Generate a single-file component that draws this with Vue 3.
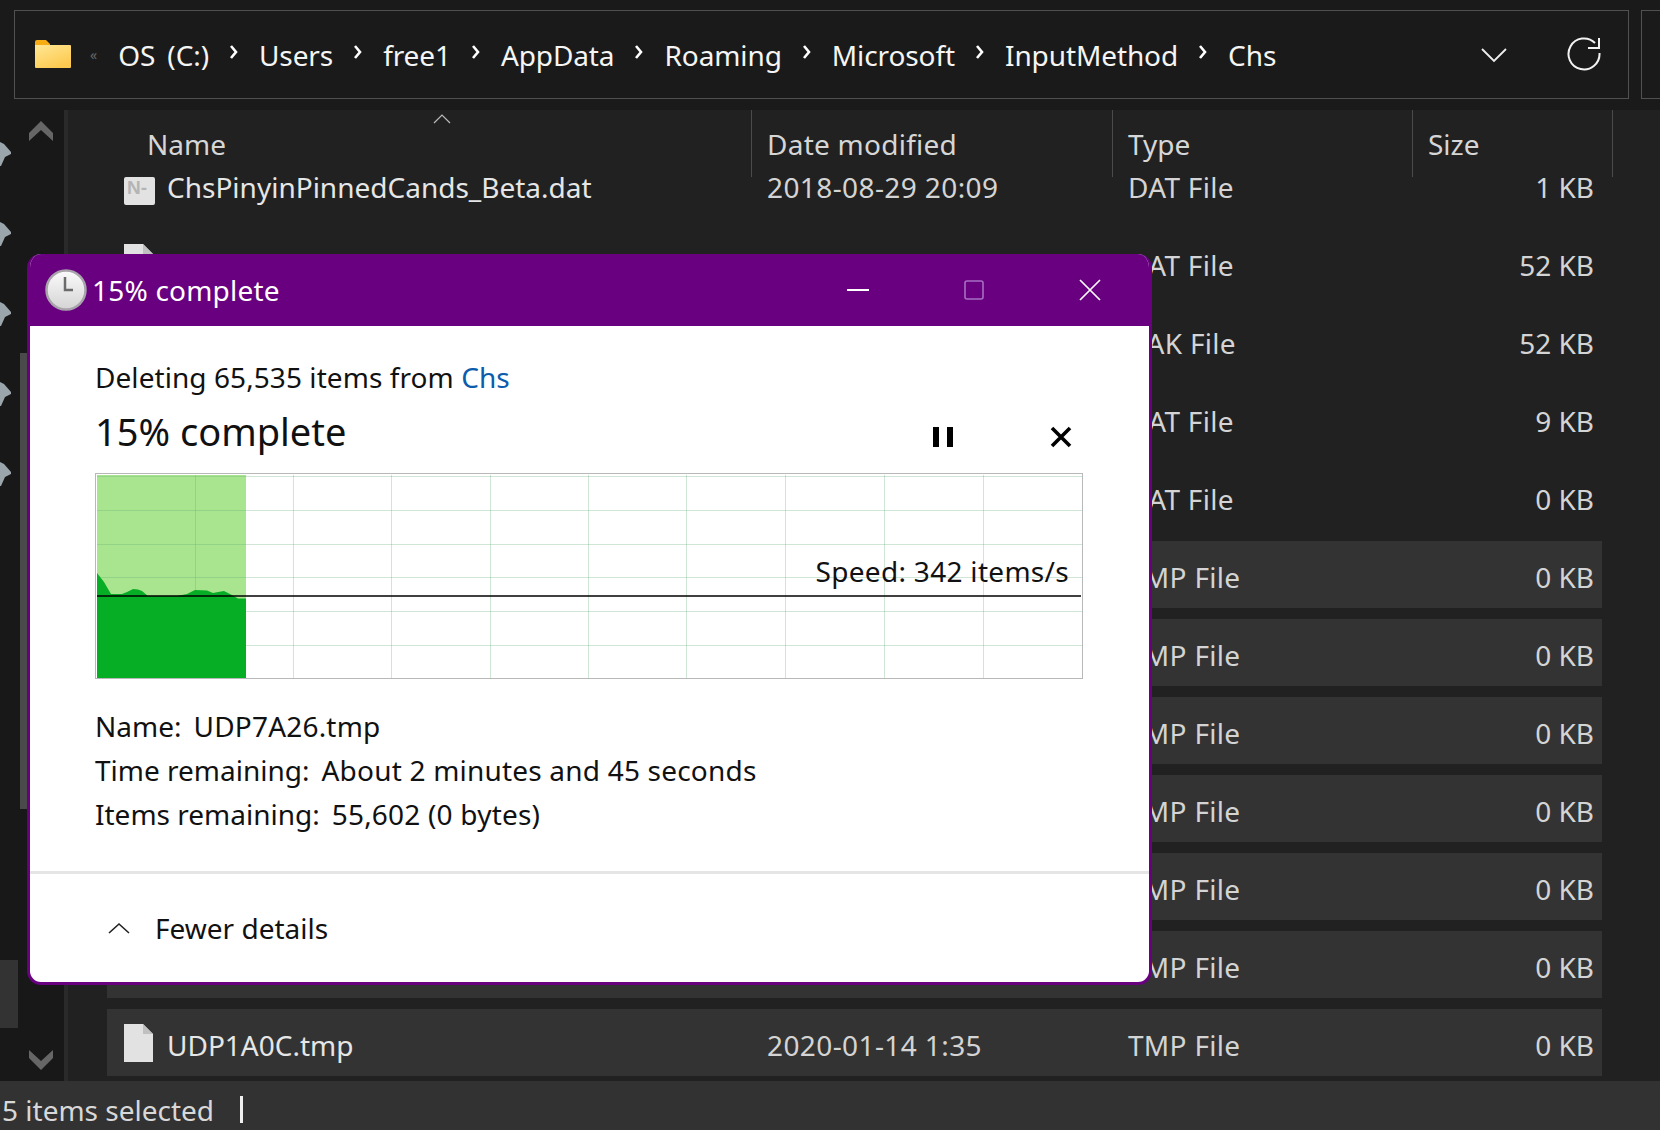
<template>
  <div class="explorer">
    <div class="topbar">
      <div class="address">
        <svg class="folder" width="38" height="30" viewBox="0 0 38 30">
          <defs>
            <linearGradient id="fold" x1="0" y1="0" x2="0.6" y2="1">
              <stop offset="0" stop-color="#ffe795" />
              <stop offset="1" stop-color="#fdca50" />
            </linearGradient>
          </defs>
          <path d="M1 3a2 2 0 0 1 2-2h9l4 4v6H1z" fill="#f6ac12" />
          <path d="M1 6h35a1 1 0 0 1 1 1v21a1 1 0 0 1-1 1H2a1 1 0 0 1-1-1z" fill="url(#fold)" />
        </svg>
        <span class="overflow">«</span>
        <template v-for="(part, i) in crumbs" :key="part">
          <span class="crumb">{{ part }}</span>
          <svg v-if="i < crumbs.length - 1" class="sep" width="10" height="16" viewBox="0 0 10 16">
            <path d="M2 2l5 6-5 6" fill="none" stroke="#fff" stroke-width="2.6" />
          </svg>
        </template>
        <svg class="drop" width="26" height="16" viewBox="0 0 26 16">
          <path d="M1 2l12 12L25 2" fill="none" stroke="#eee" stroke-width="1.8" />
        </svg>
        <svg class="refresh" width="34" height="36" viewBox="0 0 34 36">
          <path d="M28 7A15.500 15.500 0 1 0 32.500 17" fill="none" stroke="#f2f2f2" stroke-width="2" />
          <path d="M21 12h11V2" fill="none" stroke="#f2f2f2" stroke-width="2" />
        </svg>
      </div>
      <div class="search"></div>
    </div>

    <div class="middle">
      <aside class="side">
        <div class="pins">
          <svg v-for="n in 5" :key="n" width="12" height="26" viewBox="0 0 12 26">
            <path d="M0 1l4 2 7 8v2l-6 3-4 9H0z" fill="#9aa6ab" />
          </svg>
          <div class="nav-active"></div>
        </div>
        <div class="side-track">
          <div class="thumb"></div>
        </div>
        <div class="scroll">
          <svg width="24" height="20" viewBox="0 0 24 20"><path d="M12 0l12 12v8L12 9 0 20v-8z" fill="#666" /></svg>
          <svg width="24" height="20" viewBox="0 0 24 20"><path d="M12 20L0 8V0l12 11L24 0v8z" fill="#666" /></svg>
        </div>
      </aside>

      <main class="list">
        <div class="head">
          <div class="col col-name">Name</div>
          <div class="col col-date">Date modified</div>
          <div class="col col-type">Type</div>
          <div class="col col-size">Size</div>
          <svg class="sort" width="18" height="10" viewBox="0 0 18 10"><path d="M1 9l8-8 8 8" fill="none" stroke="#bbb" stroke-width="1.2" /></svg>
        </div>
        <div class="rows">
          <div v-for="(f, i) in files" :key="i" class="row" :class="{ picked: f.picked }">
            <div class="cell-name">
              <svg v-if="f.note" class="file" width="32" height="40" viewBox="0 0 32 40">
                <rect x="1" y="12" width="31" height="28" rx="2" fill="#e2e2e2" />
                <text x="4" y="29" class="note">N-</text>
              </svg>
              <svg v-else class="file" width="32" height="38" viewBox="0 0 32 38">
                <path d="M1 0h19l10 10v28H1z" fill="#e2e2e2" />
                <path d="M20 0l10 10H20z" fill="#c0c0c0" />
              </svg>
              <span>{{ f.name }}</span>
            </div>
            <div class="cell-date">{{ f.date }}</div>
            <div class="cell-type">{{ f.type }}</div>
            <div class="cell-size">{{ f.size }}</div>
          </div>
        </div>
      </main>
    </div>

    <footer class="status">
      <span>5 items selected</span>
      <i class="bar"></i>
    </footer>

    <section class="dialog">
      <header class="titlebar">
        <svg class="clock" width="42" height="42" viewBox="0 0 42 42">
          <defs>
            <linearGradient id="face" x1="0" y1="0" x2="0" y2="1">
              <stop offset="0" stop-color="#fbfbfb" />
              <stop offset="1" stop-color="#d4d4d4" />
            </linearGradient>
          </defs>
          <circle cx="21" cy="21" r="19.500" fill="url(#face)" stroke="#a9a4ac" stroke-width="2.500" />
          <path d="M20 8v13h8" fill="none" stroke="#6b6b6b" stroke-width="2.500" />
        </svg>
        <span class="title">15% complete</span>
        <div class="winbtns">
          <svg width="22" height="4" viewBox="0 0 22 4"><path d="M0 2h22" stroke="#fff" stroke-width="2" /></svg>
          <svg width="20" height="20" viewBox="0 0 20 20"><rect x="1" y="1" width="18" height="18" rx="2" fill="none" stroke="#a66fc2" stroke-width="1.600" /></svg>
          <svg width="22" height="22" viewBox="0 0 22 22"><path d="M1 1l20 20M21 1L1 21" stroke="#fff" stroke-width="1.700" /></svg>
        </div>
      </header>

      <div class="body">
        <div class="from">Deleting 65,535 items from <span class="link">Chs</span></div>
        <div class="progress-line">
          <span class="big">15% complete</span>
          <div class="actions">
            <svg width="20" height="20" viewBox="0 0 20 20"><path d="M0 0h6v20H0zM14 0h6v20h-6z" fill="#000" /></svg>
            <svg width="22" height="22" viewBox="0 0 22 22"><path d="M2 2l18 18M20 2L2 20" stroke="#000" stroke-width="3.600" /></svg>
          </div>
        </div>

        <div class="chart">
          <svg class="graph" width="986" height="204" viewBox="0 0 986 204">
            <rect x="1" y="1" width="149" height="203" fill="#a9e58f" />
            <path v-for="y in gridY" :key="'h' + y" :d="`M1 ${y + 0.5}H986`" stroke="#5fa878" stroke-opacity="0.3" />
            <path v-for="x in gridX" :key="'v' + x" :d="`M${x + 0.5} 1V204`" stroke="#5fa878" stroke-opacity="0.3" />
            <path :d="curve" fill="#06ae26" />
            <path d="M1 122H985" stroke="#000" stroke-width="1.400" />
          </svg>
          <span class="speed">Speed: 342 items/s</span>
        </div>

        <dl class="details">
          <div><dt>Name:</dt><dd>UDP7A26.tmp</dd></div>
          <div><dt>Time remaining:</dt><dd>About 2 minutes and 45 seconds</dd></div>
          <div><dt>Items remaining:</dt><dd>55,602 (0 bytes)</dd></div>
        </dl>
      </div>

      <div class="more">
        <svg width="22" height="12" viewBox="0 0 22 12"><path d="M1 11l10-9 10 9" fill="none" stroke="#222" stroke-width="1.600" /></svg>
        <span>Fewer details</span>
      </div>
    </section>
  </div>
</template>

<script setup>
const crumbs = ['OS (C:)', 'Users', 'free1', 'AppData', 'Roaming', 'Microsoft', 'InputMethod', 'Chs']

const files = [
  { name: 'ChsPinyinPinnedCands_Beta.dat', date: '2018-08-29 20:09', type: 'DAT File', size: '1 KB', note: true },
  { name: '', date: '', type: 'DAT File', size: '52 KB' },
  { name: '', date: '', type: 'BAK File', size: '52 KB' },
  { name: '', date: '', type: 'DAT File', size: '9 KB' },
  { name: '', date: '', type: 'DAT File', size: '0 KB' },
  { name: '', date: '', type: 'TMP File', size: '0 KB', picked: true },
  { name: '', date: '', type: 'TMP File', size: '0 KB', picked: true },
  { name: '', date: '', type: 'TMP File', size: '0 KB', picked: true },
  { name: '', date: '', type: 'TMP File', size: '0 KB', picked: true },
  { name: '', date: '', type: 'TMP File', size: '0 KB', picked: true },
  { name: '', date: '', type: 'TMP File', size: '0 KB', picked: true },
  { name: 'UDP1A0C.tmp', date: '2020-01-14 1:35', type: 'TMP File', size: '0 KB', picked: true }
]

const gridY = [2, 36, 70, 103, 137, 171]
const gridX = [99, 197, 295, 394, 492, 590, 689, 788, 887]

// speed history, traced from the graph
const curve = 'M1 99L8 108L15 120H26L31 118L37 115L42 115.500L46 117L52 122H81L91 120L99 116L111 116.500L117 119L122 118L128 117L134 120L142 124.500H150V204H1Z'
</script>

<style>
html,
body {
  background: #1a1a1a;
}
</style>

<style scoped>
.explorer {
  position: relative;
  width: 1660px;
  height: 1130px;
  overflow: hidden;
  display: flex;
  flex-direction: column;
  background: #1a1a1a;
  color: #e6e6e6;
  font-family: "Noto Sans", "Open Sans", sans-serif;
  font-size: 28px;
}

.topbar {
  height: 110px;
  flex: none;
  display: flex;
  gap: 12px;
  padding: 10px 0 11px 14px;
  box-sizing: border-box;
}

.address {
  width: 1615px;
  flex: none;
  display: flex;
  align-items: center;
  border: 1px solid #505050;
  box-sizing: border-box;
  padding: 0 0 0 19px;
  color: #f5f5f5;
}

.search {
  flex: 1;
  border: 1px solid #505050;
  border-right: 0;
}

.folder {
  margin-right: 18px;
  position: relative;
  top: -1px;
}

.overflow {
  color: #666;
  font-size: 14px;
  margin-right: 21px;
}

.crumb {
  white-space: nowrap;
  letter-spacing: -0.1px;
  word-spacing: 5px;
}

.sep {
  margin: 0 20px;
  position: relative;
  top: -3px;
}

.drop {
  margin-left: auto;
  margin-right: 60px;
}

.refresh {
  margin-right: 27px;
  position: relative;
  top: -1px;
}

.middle {
  flex: 1;
  min-height: 0;
  display: flex;
}

.side {
  width: 64px;
  flex: none;
  display: flex;
  border-right: 4px solid #2a2a2a;
  background: #181818;
}

.pins {
  width: 20px;
  flex: none;
  display: flex;
  flex-direction: column;
  gap: 54px;
  padding-top: 31px;
  box-sizing: border-box;
}

.nav-active {
  width: 18px;
  height: 68px;
  flex: none;
  margin-top: 419px;
  background: #333;
}

.side-track {
  width: 7px;
  flex: none;
  padding-top: 243px;
}

.thumb {
  width: 7px;
  height: 456px;
  background: #4a4a4a;
}

.scroll {
  width: 28px;
  flex: none;
  display: flex;
  flex-direction: column;
  justify-content: space-between;
  align-items: center;
  padding: 11px 0 11px;
}

.list {
  flex: 1;
  min-width: 0;
  position: relative;
  background: #212121;
}

.head {
  height: 67px;
  display: flex;
  position: relative;
  color: #d6d6d6;
}

.col {
  box-sizing: border-box;
  padding-top: 15px;
  border-right: 1px solid #4b4b4b;
}

.col-name {
  width: 684px;
  padding-left: 79px;
}

.col-date {
  width: 361px;
  padding-left: 15px;
  letter-spacing: 0.25px;
}

.col-type {
  width: 300px;
  padding-left: 15px;
}

.col-size {
  width: 200px;
  padding-left: 15px;
}

.sort {
  position: absolute;
  left: 365px;
  top: 4px;
}

.rows {
  display: flex;
  flex-direction: column;
  gap: 11px;
  margin: 0 58px 0 39px;
}

.row {
  height: 67px;
  flex: none;
  display: flex;
  align-items: center;
  color: #d4d4d4;
}

.row:first-child {
  margin-top: -26px;
}

.picked {
  background: #333333;
}

.cell-name {
  width: 660px;
  flex: none;
  display: flex;
  align-items: center;
  gap: 12px;
  padding-left: 16px;
  box-sizing: border-box;
  color: #e6e6e6;
}

.cell-name span,
.cell-date,
.cell-type,
.cell-size {
  padding-top: 4px;
}

.cell-date {
  width: 361px;
  flex: none;
  letter-spacing: 0.4px;
}

.cell-type {
  width: 297px;
  flex: none;
  letter-spacing: 0.3px;
}

.cell-size {
  flex: 1;
  padding-right: 8px;
  text-align: right;
}

.note {
  font-size: 19px;
  font-weight: 700;
  fill: #b4b4b4;
  font-family: "Liberation Sans", sans-serif;
}

.status {
  height: 49px;
  flex: none;
  box-sizing: border-box;
  background: #323232;
  color: #d8d8d8;
  display: flex;
  align-items: center;
  gap: 26px;
  padding: 8px 0 0 2px;
}

.bar {
  width: 3px;
  height: 27px;
  background: #f0f0f0;
}

.dialog {
  position: absolute;
  left: 27px;
  top: 254px;
  width: 1125px;
  height: 731px;
  box-sizing: border-box;
  background: #fff;
  color: #111;
  border: 3px solid #680080;
  border-top: 0;
  border-radius: 14px;
  overflow: hidden;
  display: flex;
  flex-direction: column;
}

.titlebar {
  height: 72px;
  flex: none;
  margin: 0 -3px;
  background: #680080;
  color: #fff;
  display: flex;
  align-items: center;
  padding: 0 51px 0 18px;
}

.title {
  margin-left: 5px;
  letter-spacing: 0.2px;
}

.winbtns {
  margin-left: auto;
  display: flex;
  align-items: center;
  gap: 95px;
}

.body {
  flex: 1;
  padding: 32px 65px 0 65px;
  border-bottom: 3px solid #e5e5e5;
}

.from {
  line-height: 38px;
  letter-spacing: 0.07px;
}

.link {
  color: #0b5cad;
}

.progress-line {
  display: flex;
  align-items: center;
  justify-content: space-between;
  height: 52px;
  margin: 9px 0 16px;
}

.big {
  font-size: 38px;
}

.actions {
  display: flex;
  align-items: center;
  gap: 97px;
  padding-right: 12px;
  padding-top: 12px;
}

.chart {
  position: relative;
  width: 988px;
  height: 206px;
  box-sizing: border-box;
  border: 1px solid #b8b8b8;
  display: flex;
}

.graph {
  display: block;
}

.speed {
  position: absolute;
  right: 13px;
  top: 77px;
  line-height: 40px;
  letter-spacing: 0.3px;
}

.details {
  margin: 25px 0 0;
}

.details div {
  display: flex;
  gap: 12px;
  height: 44px;
  align-items: center;
}

.details dt,
.details dd {
  margin: 0;
}

.details dd {
  letter-spacing: 0.2px;
}

.more {
  height: 108px;
  flex: none;
  display: flex;
  align-items: center;
  gap: 25px;
  padding-left: 78px;
}
</style>
